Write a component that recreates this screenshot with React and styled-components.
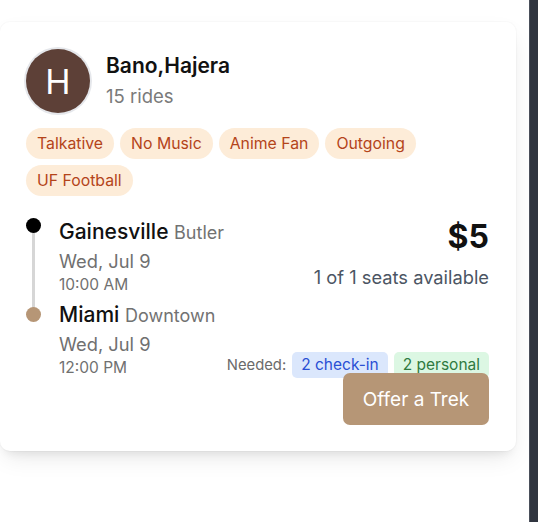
import React from "react";
import styled, { createGlobalStyle } from "styled-components";

const GlobalStyle = createGlobalStyle`
  html, body {
    margin: 0;
    padding: 0;
    background: #ffffff;
  }
  body {
    font-family: Inter, "Noto Sans", "Liberation Sans", sans-serif;
    -webkit-font-smoothing: antialiased;
  }
`;

const Page = styled.div`
  display: flex;
  width: 538px;
  height: 522px;
  overflow: hidden;
`;

const Main = styled.div`
  flex: 1;
  padding-top: 22px;
`;

const SideBar = styled.div`
  width: 8px;
  background: #30353f;
  border-left: 1px solid #4a4f5a;
`;

const Card = styled.div`
  width: 516px;
  box-sizing: border-box;
  padding: 26px 27px 26px 26px;
  background: #fff;
  border-radius: 10px;
  box-shadow: 0 0 0 1px rgba(0, 0, 0, 0.02), 0 10px 25px -5px rgba(0, 0, 0, 0.1),
    0 8px 10px -6px rgba(0, 0, 0, 0.08);
`;

const Header = styled.div`
  display: flex;
  align-items: center;
  gap: 16px;
`;

const Avatar = styled.div`
  width: 64px;
  height: 64px;
  margin-top: 1px;
  border-radius: 50%;
  background: #5d4037;
  box-shadow: 0 0 0 2px #e5e7eb;
  display: flex;
  align-items: center;
  justify-content: center;
  color: #fff;
  font-size: 34px;
  font-weight: 400;
`;

const Name = styled.div`
  font-size: 21px;
  font-weight: 600;
  color: #111;
  line-height: 28px;
`;

const Rides = styled.div`
  font-size: 18.5px;
  color: #7a7a7a;
  line-height: 26px;
  margin-top: 3px;
`;

const Tags = styled.div`
  display: flex;
  flex-wrap: wrap;
  gap: 6px 6px;
  margin-top: 15px;
  width: 420px;
`;

const Tag = styled.span`
  display: inline-block;
  padding: 0 11px;
  height: 31px;
  line-height: 31px;
  border-radius: 999px;
  background: #fdecd8;
  color: #b4441a;
  font-size: 15.8px;
`;

const Trip = styled.div`
  display: flex;
  justify-content: space-between;
  margin-top: 22px;
`;

const Route = styled.div`
  position: relative;
  display: flex;
  flex-direction: column;
  gap: 6px;
`;

const Line = styled.div`
  position: absolute;
  left: 6px;
  top: 8px;
  height: 90px;
  width: 3px;
  background: #d6d6d6;
`;

const Stop = styled.div`
  display: flex;
  gap: 18px;
`;

const Dot = styled.div`
  position: relative;
  flex: none;
  width: 15px;
  height: 15px;
  border-radius: 50%;
  background: ${(p) => p.$color};
  margin-top: ${(p) => p.$top}px;
`;

const Place = styled.div`
  font-size: 21px;
  font-weight: 500;
  color: #111;
  line-height: 28px;
`;

const Area = styled.span`
  font-size: 18px;
  font-weight: 400;
  color: #727272;
`;

const Date = styled.div`
  font-size: 18.3px;
  color: #707070;
  line-height: 28px;
`;

const Time = styled.div`
  font-size: 15.5px;
  color: #707070;
  line-height: 20px;
`;

const Side = styled.div`
  display: flex;
  flex-direction: column;
  justify-content: space-between;
  align-items: flex-end;
`;

const Price = styled.div`
  font-size: 32px;
  font-weight: 700;
  color: #111;
  line-height: 36px;
  margin-top: 1px;
`;

const Seats = styled.div`
  font-size: 18.3px;
  color: #4b5563;
  line-height: 28px;
  margin-top: 8px;
`;

const Needed = styled.div`
  display: flex;
  align-items: center;
  gap: 6px;
  font-size: 14.8px;
  color: #6b6b6b;
`;

const Badge = styled.span`
  height: 26px;
  line-height: 26px;
  padding: 0 9px;
  border-radius: 5px;
  font-size: 15.5px;
  background: ${(p) => (p.$tone === "blue" ? "#dbe7fc" : "#dcf7e3")};
  color: ${(p) => (p.$tone === "blue" ? "#2a4fd4" : "#2f7a3f")};
`;

const Actions = styled.div`
  display: flex;
  justify-content: flex-end;
  margin-top: -5px;
  position: relative;
`;

const Button = styled.button`
  width: 146px;
  height: 52px;
  border: none;
  border-radius: 7px;
  background: #b69676;
  color: #fff;
  font-family: inherit;
  font-size: 19px;
  cursor: pointer;
`;

const tags = ["Talkative", "No Music", "Anime Fan", "Outgoing", "UF Football"];

const stops = [
  { place: "Gainesville", area: "Butler", date: "Wed, Jul 9", time: "10:00 AM", color: "#000", top: 0 },
  { place: "Miami", area: "Downtown", date: "Wed, Jul 9", time: "12:00 PM", color: "#b69676", top: 6 },
];

export default function App() {
  return (
    <>
      <GlobalStyle />
      <Page>
        <Main>
          <Card>
            <Header>
              <Avatar>H</Avatar>
              <div>
                <Name>Bano,Hajera</Name>
                <Rides>15 rides</Rides>
              </div>
            </Header>
            <Tags>
              {tags.map((t) => (
                <Tag key={t}>{t}</Tag>
              ))}
            </Tags>
            <Trip>
              <Route>
                <Line />
                {stops.map((s) => (
                  <Stop key={s.place}>
                    <Dot $color={s.color} $top={s.top} />
                    <div>
                      <Place>
                        {s.place} <Area>{s.area}</Area>
                      </Place>
                      <Date>{s.date}</Date>
                      <Time>{s.time}</Time>
                    </div>
                  </Stop>
                ))}
              </Route>
              <Side>
                <div style={{ textAlign: "right" }}>
                  <Price>$5</Price>
                  <Seats>1 of 1 seats available</Seats>
                </div>
                <Needed>
                  Needed:
                  <Badge $tone="blue">2 check-in</Badge>
                  <Badge $tone="green">2 personal</Badge>
                </Needed>
              </Side>
            </Trip>
            <Actions>
              <Button>Offer a Trek</Button>
            </Actions>
          </Card>
        </Main>
        <SideBar />
      </Page>
    </>
  );
}
